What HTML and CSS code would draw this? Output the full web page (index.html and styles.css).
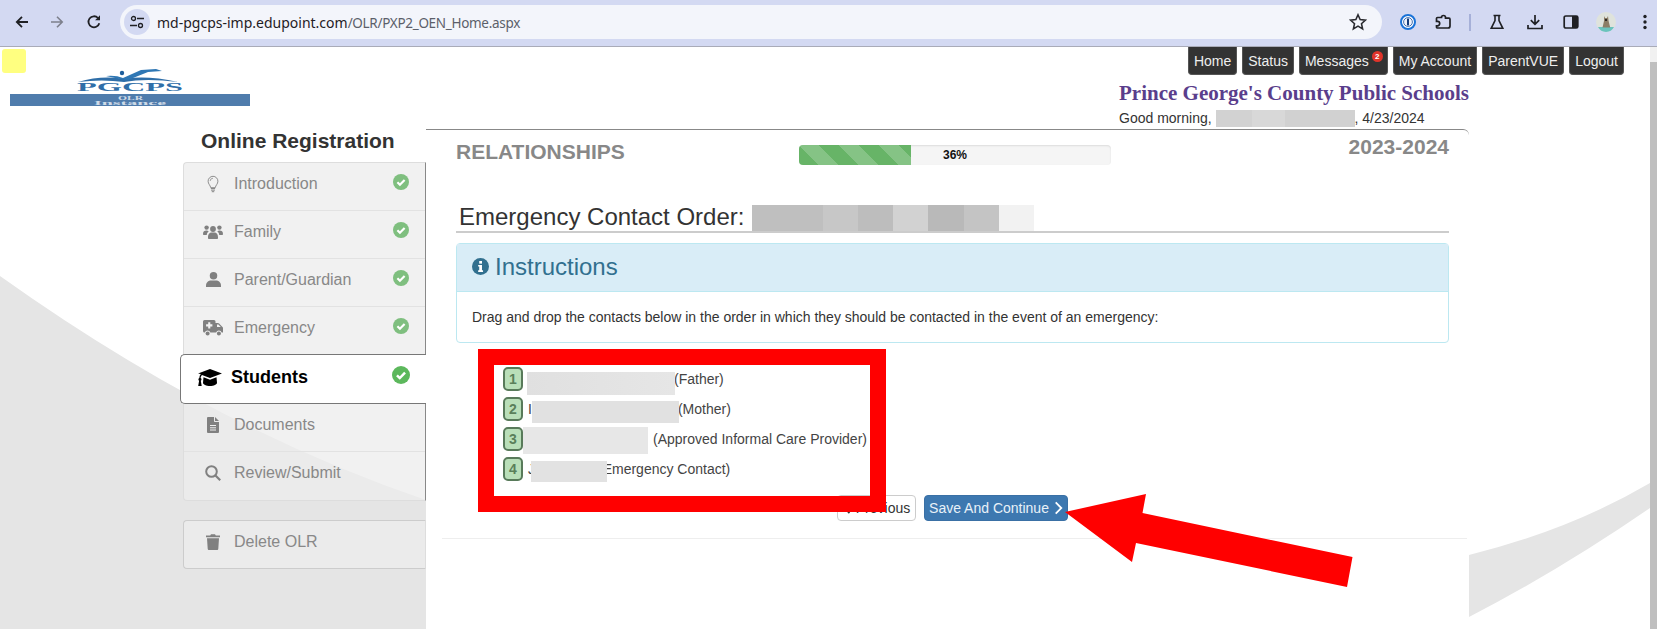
FILE: index.html
```html
<!DOCTYPE html>
<html lang="en">
<head>
<meta charset="utf-8">
<title>Online Registration</title>
<link rel="stylesheet" href="styles.css">
</head>
<body>
<svg class="defs" width="0" height="0" aria-hidden="true">
  <symbol id="i-check" viewBox="0 0 16 16"><circle cx="8" cy="8" r="8" fill="currentColor"/><path d="M4.4 8.3l2.5 2.4 4.7-4.8" fill="none" stroke="#fff" stroke-width="2.2"/></symbol>
  <symbol id="i-bulb" viewBox="0 0 16 20"><path d="M8 1.2a5.6 5.6 0 0 0-5.6 5.6c0 3.2 2.6 4.6 3 7.4h5.2c.4-2.8 3-4.2 3-7.4A5.6 5.6 0 0 0 8 1.2z" fill="none" stroke="currentColor" stroke-width="1"/><path d="M5.6 15.2h4.8M5.8 17h4.4M6.6 18.8h2.8" stroke="currentColor" stroke-width="1.1" fill="none"/><path d="M8 3.4a3.4 3.4 0 0 0-3.3 3.2" fill="none" stroke="currentColor" stroke-width=".8"/></symbol>
  <symbol id="i-users" viewBox="0 0 20 16"><circle cx="3.6" cy="3.6" r="2.2" fill="currentColor"/><circle cx="16.4" cy="3.6" r="2.2" fill="currentColor"/><circle cx="10" cy="5" r="2.9" fill="currentColor"/><path d="M0 10c0-2.4 1.4-3.4 3.4-3.4 1 0 1.8.3 2.3.8C4.4 8.300 3.800 9.500 3.800 11H1c-.6 0-1-.4-1-1zM20 10c0-2.400-1.400-3.400-3.400-3.400-1 0-1.800.3-2.300.8 1.300.9 1.900 2.100 1.900 3.600H19c.6 0 1-.4 1-1zM5 13c0-2.600 1.600-4.400 3.400-4.400h3.200C13.400 8.600 15 10.400 15 13v1c0 .7-.5 1-1 1H6c-.5 0-1-.3-1-1z" fill="currentColor"/></symbol>
  <symbol id="i-user" viewBox="0 0 16 16"><circle cx="8" cy="4" r="4" fill="currentColor"/><path d="M0 14.500C0 11.300 2.400 9 5 9h6c2.600 0 5 2.300 5 5.500V16H0z" fill="currentColor"/></symbol>
  <symbol id="i-amb" viewBox="0 0 20 16"><path d="M1.500 0h9.500a1.500 1.500 0 0 1 1.500 1.500V3h2.400c.5 0 .9.200 1.200.5L19.500 7c.3.3.5.7.5 1.100V12.500h-1.300a3 3 0 0 0-5.600 0H7.400a3 3 0 0 0-5.600 0H1.500A1.500 1.500 0 0 1 0 11V1.500A1.500 1.500 0 0 1 1.500 0z" fill="currentColor"/><circle cx="4.600" cy="13.400" r="2" fill="currentColor"/><circle cx="15.900" cy="13.400" r="2" fill="currentColor"/><path d="M5.200 2.200h2.100v2.100h2.100v2.100H7.300v2.100H5.200V6.400H3.100V4.300h2.100z" fill="#f1f1f1"/><path d="M14 4.600h1.400l2.400 2.500H14z" fill="#f1f1f1"/></symbol>
  <symbol id="i-cap" viewBox="0 0 24 18"><path d="M12 0l12 4.500-12 4.600-8-3.100c-.9.800-1.300 1.900-1.400 3.100.6.300.9.800.9 1.400 0 .5-.3 1-.7 1.300l.9 5.200H.2l.9-5.200C.7 11.500.4 11 .4 10.500c0-.6.4-1.100.9-1.400.1-1.500.6-2.900 1.500-4L0 4.500z" fill="currentColor"/><path d="M5.500 8.200l6.500 2.500 6.500-2.500.5 5.600c0 1.700-3.200 3.200-7 3.200s-7-1.500-7-3.200z" fill="currentColor"/></symbol>
  <symbol id="i-file" viewBox="0 0 12 16"><path d="M1 0h6v4.200c0 .5.300.8.800.8H12v10a1 1 0 0 1-1 1H1a1 1 0 0 1-1-1V1a1 1 0 0 1 1-1z" fill="currentColor"/><path d="M8 0l4 4H8z" fill="currentColor"/><path d="M3 8.500h6M3 10.800h6M3 13h6" stroke="#f0f0f0" stroke-width="1"/></symbol>
  <symbol id="i-search" viewBox="0 0 16 16"><circle cx="6.500" cy="6.500" r="5.300" fill="none" stroke="currentColor" stroke-width="2"/><path d="M10.500 10.500l4.700 4.700" stroke="currentColor" stroke-width="2.200" fill="none"/></symbol>
  <symbol id="i-trash" viewBox="0 0 14 16"><path d="M0 1.500h4.200L5 .3h4l.8 1.200H14v1.700H0z" fill="currentColor"/><path d="M1 4.200h12l-.7 10.500c0 .7-.6 1.300-1.300 1.300H3c-.7 0-1.300-.6-1.300-1.300z" fill="currentColor"/></symbol>
</svg>

<header class="chrome">
  <svg class="tb tb-back" viewBox="0 0 16 16"><path d="M14 8H3M8 2.800L2.800 8 8 13.200" fill="none" stroke="#1f2024" stroke-width="1.800"/></svg>
  <svg class="tb tb-forward" viewBox="0 0 16 16"><path d="M2 8h11M8 2.800L13.200 8 8 13.200" fill="none" stroke="#7d808c" stroke-width="1.600"/></svg>
  <svg class="tb tb-reload" viewBox="0 0 16 16"><path d="M13.300 9.200A5.500 5.500 0 1 1 12 4" fill="none" stroke="#1f2024" stroke-width="1.800"/><path d="M14 1.300v4.900H9.100z" fill="#1f2024"/></svg>
  <div class="omnibox">
    <span class="site-info"><svg viewBox="0 0 16 16" width="16" height="16"><circle cx="4.500" cy="4.500" r="2" fill="none" stroke="#1f2024" stroke-width="1.300"/><circle cx="11.500" cy="11.500" r="2" fill="none" stroke="#1f2024" stroke-width="1.300"/><path d="M8 4.500h7M1 11.500h7" stroke="#1f2024" stroke-width="1.300"/></svg></span>
    <span class="url"><span class="url-host">md-pgcps-imp.edupoint.com</span>/OLR/PXP2_OEN_Home.aspx</span>
    <svg class="star" viewBox="0 0 16 16"><path d="M8 1.600l1.900 4.300 4.700.5-3.500 3.100 1 4.600L8 11.700l-4.100 2.400 1-4.600L1.400 6.400l4.700-.5z" fill="none" stroke="#2a2b30" stroke-width="1.400"/></svg>
  </div>
  <svg class="tb tb-pw" viewBox="0 0 16 16"><circle cx="8" cy="8" r="7" fill="#fff" stroke="#1a73d8" stroke-width="2"/><circle cx="8" cy="8" r="4.400" fill="#eef2fa" stroke="#1b4f9c" stroke-width=".8"/><rect x="7" y="4.600" width="2" height="6.800" fill="#123a78"/></svg>
  <svg class="tb tb-ext" viewBox="0 0 18 18"><path d="M5 4.500h2.500a2 2 0 0 1 4 0V5.200h3.500a1 1 0 0 1 1 1V13a2 2 0 0 1-2 2H3.500a1 1 0 0 1-1-1v-1.200h1a2.200 2.200 0 0 0 0-4.400h-1V5.500a1 1 0 0 1 1-1z" fill="none" stroke="#1f2024" stroke-width="1.700"/></svg>
  <span class="tb-sep"></span>
  <svg class="tb tb-flask" viewBox="0 0 16 16"><path d="M4.500 1.500h7M6 1.500v5L2.200 14.300h11.600L10 6.500v-5" fill="none" stroke="#1f2024" stroke-width="1.600"/></svg>
  <svg class="tb tb-dl" viewBox="0 0 16 16"><path d="M8 1v9M3.800 6.200L8 10.400l4.200-4.200M1 11v3.500h14V11" fill="none" stroke="#1f2024" stroke-width="1.700"/></svg>
  <svg class="tb tb-side" viewBox="0 0 16 16"><rect x="1.200" y="2" width="13.600" height="12" rx="1.600" fill="none" stroke="#1f2024" stroke-width="1.700"/><rect x="9" y="2" width="5.800" height="12" fill="#1f2024"/></svg>
  <svg class="tb tb-avatar" viewBox="0 0 20 20"><circle cx="10" cy="10" r="10" fill="#dfe3dc"/><path d="M2 15h16a9 9 0 0 1-16 0z" fill="#6ac3bd"/><path d="M8 4l1 2h2l1-2 .6 5 1.600 6.500H6.500L8 9z" fill="#8b7d66"/><path d="M9 7h2v2H9z" fill="#2d2a26"/></svg>
  <svg class="tb tb-menu" viewBox="0 0 4 16"><circle cx="2" cy="2.500" r="1.700" fill="#1f2024"/><circle cx="2" cy="8" r="1.700" fill="#1f2024"/><circle cx="2" cy="13.500" r="1.700" fill="#1f2024"/></svg>
</header>

<div class="viewport">
  <div class="page">
    <svg class="backdrop" viewBox="0 0 1650 582" width="1650" height="582" aria-hidden="true">
      <path d="M0 229Q213 381 426 453V582H0Z" fill="#e5e5e5"/>
      <path d="M1469 508Q1570 483 1650 436V461Q1560 523 1469 570Z" fill="#e5e5e5"/>
    </svg>

    <div class="flag"></div>

    <div class="top">
      <div class="logo">
        <svg viewBox="0 0 240 37" width="240" height="37">
          <path d="M68 13Q92 6 114 10Q136 6 168 13Q136 9 114 13Q92 10 68 13Z" fill="#2f6ea8"/>
          <path d="M96 7Q106 6 113 9L131 1L146 0L152 2L138 3L118 11Q108 10 96 7Z" fill="#2f77b4"/>
          <circle cx="112" cy="4" r="2.200" fill="#1f5f9c"/>
          <text class="logo-mark" x="67" y="22" textLength="106" lengthAdjust="spacingAndGlyphs">PGCPS</text>
          <rect x="0" y="25" width="240" height="12" fill="#4f7cac"/>
          <text class="logo-sub" x="108" y="31" textLength="25" lengthAdjust="spacingAndGlyphs">OLR</text>
          <text class="logo-sub" x="84" y="36" textLength="72" lengthAdjust="spacingAndGlyphs">Instance</text>
        </svg>
      </div>
      <div class="top-right">
        <nav class="nav">
          <a class="nav-btn">Home</a>
          <a class="nav-btn">Status</a>
          <a class="nav-btn nav-msg">Messages<span class="badge">2</span></a>
          <a class="nav-btn">My Account</a>
          <a class="nav-btn">ParentVUE</a>
          <a class="nav-btn">Logout</a>
        </nav>
        <div class="school">Prince George's County Public Schools</div>
        <div class="greeting">Good morning, <span class="mask mask-greet"></span>, 4/23/2024</div>
      </div>
    </div>

    <div class="main">
      <aside class="sidebar">
        <h3 class="side-title">Online Registration</h3>
        <ul class="steps">
          <li class="step"><span class="step-icon"><svg width="14" height="18"><use href="#i-bulb"/></svg></span>Introduction<svg class="ok" width="16" height="16"><use href="#i-check"/></svg></li>
          <li class="step"><span class="step-icon"><svg width="20" height="16"><use href="#i-users"/></svg></span>Family<svg class="ok" width="16" height="16"><use href="#i-check"/></svg></li>
          <li class="step"><span class="step-icon"><svg width="15" height="15"><use href="#i-user"/></svg></span>Parent/Guardian<svg class="ok" width="16" height="16"><use href="#i-check"/></svg></li>
          <li class="step"><span class="step-icon"><svg width="20" height="16"><use href="#i-amb"/></svg></span>Emergency<svg class="ok" width="16" height="16"><use href="#i-check"/></svg></li>
          <li class="step step-active"><span class="step-icon"><svg width="24" height="18"><use href="#i-cap"/></svg></span>Students<svg class="ok" width="18" height="18"><use href="#i-check"/></svg></li>
          <li class="step"><span class="step-icon"><svg width="12" height="16"><use href="#i-file"/></svg></span>Documents</li>
          <li class="step"><span class="step-icon"><svg width="16" height="16"><use href="#i-search"/></svg></span>Review/Submit</li>
        </ul>
        <div class="delete"><span class="step-icon"><svg width="14" height="16"><use href="#i-trash"/></svg></span>Delete OLR</div>
      </aside>

      <section class="content">
        <div class="status-row">
          <div class="section-name">RELATIONSHIPS</div>
          <div class="progress"><div class="progress-fill"></div><span class="progress-label">36%</span></div>
          <div class="year">2023-2024</div>
        </div>
        <h2 class="order-title">Emergency Contact Order: <span class="mask mask-order"></span></h2>
        <div class="panel">
          <div class="panel-head"><svg class="info" viewBox="0 0 16 16" width="17" height="17"><circle cx="8" cy="8" r="8" fill="#31708f"/><rect x="6.800" y="2.800" width="2.600" height="2.500" fill="#fff"/><path d="M5.800 6.500h3.600v5h1v1.600H5.800v-1.600h1v-3.400h-1z" fill="#fff"/></svg>Instructions</div>
          <div class="panel-body">Drag and drop the contacts below in the order in which they should be contacted in the event of an emergency:</div>
        </div>
        <ol class="contacts">
          <li class="contact"><span class="num">1</span><span class="mask mask-c1"></span><span>(Father)</span></li>
          <li class="contact"><span class="num">2</span><span class="initial initial-i">I</span><span class="mask mask-c2"></span><span>(Mother)</span></li>
          <li class="contact"><span class="num">3</span><span class="mask mask-c3"></span><span>(Approved Informal Care Provider)</span></li>
          <li class="contact"><span class="num">4</span><span class="initial initial-j">J</span><span class="mask mask-c4"></span><span>(Emergency Contact)</span></li>
        </ol>
        <div class="actions">
          <button class="btn btn-prev"><svg viewBox="0 0 8 12" width="8" height="12"><path d="M6.500 1L1.500 6l5 5" fill="none" stroke="#333" stroke-width="1.800"/></svg>Previous</button>
          <button class="btn btn-save">Save And Continue<svg viewBox="0 0 8 12" width="9" height="14"><path d="M1.500 1l5 5-5 5" fill="none" stroke="#fff" stroke-width="1.600"/></svg></button>
        </div>
        <div class="rule"></div>
      </section>
    </div>

    <svg class="annotations" viewBox="0 0 1650 582" width="1650" height="582" aria-hidden="true">
      <rect x="486" y="310" width="392" height="147" fill="none" stroke="#ff0000" stroke-width="16"/>
      <path d="M1065 465L1146 447L1142.500 466L1352.500 510L1347 540L1136 496L1132 515Z" fill="#ff0000"/>
    </svg>
  </div>
  <div class="scrollbar"><div class="scroll-thumb"></div></div>
</div>
</body>
</html>
```
FILE: styles.css
```css
* { box-sizing: border-box; }
html, body { margin: 0; padding: 0; height: 100%; overflow: hidden; }
body { font-family: "Liberation Sans", Arial, sans-serif; font-size: 14px; color: #333; background: #fff; }
.defs { position: absolute; }

/* browser chrome */
.chrome { height: 47px; background: #d3d9f2; border-bottom: 1px solid #a9abb8; display: flex; align-items: center; padding: 0 0 2px 14px; }
.tb { display: block; flex: none; width: 16px; height: 16px; }
.tb-forward { margin-left: 19px; }
.tb-reload { margin-left: 21px; }
.omnibox { margin-left: 18px; width: 1262px; height: 34px; border-radius: 17px; background: #f3f5fb; display: flex; align-items: center; padding: 0 15px 0 4px; flex: none; }
.site-info { width: 26px; height: 26px; border-radius: 50%; background: #d3d9f2; display: flex; align-items: center; justify-content: center; flex: none; }
.url { margin-left: 7px; font-family: "Noto Sans", sans-serif; font-size: 13.5px; letter-spacing: -.3px; color: #5c5f6a; flex: 1; }
.url-host { font-size: 14px; letter-spacing: 0; color: #1f2024; }
.star { width: 18px; height: 18px; flex: none; }
.tb-pw { margin-left: 18px; width: 16px; height: 16px; }
.tb-ext { margin-left: 18px; width: 18px; height: 18px; }
.tb-sep { margin-left: 17px; width: 2px; height: 17px; background: #a6b0d8; flex: none; }
.tb-flask { margin-left: 18px; width: 16px; height: 16px; }
.tb-dl { margin-left: 22px; }
.tb-side { margin-left: 20px; }
.tb-avatar { margin-left: 17px; width: 20px; height: 20px; }
.tb-menu { margin-left: 27px; width: 4px; height: 16px; }

/* viewport */
.viewport { display: flex; height: 582px; }
.page { position: relative; isolation: isolate; width: 1650px; height: 582px; flex: none; overflow: hidden; }
.backdrop { position: absolute; left: 0; top: 0; z-index: -1; }
.annotations { position: absolute; left: 0; top: 0; pointer-events: none; }
.scrollbar { width: 7px; background: #f1f1f1; padding-top: 15px; }
.scroll-thumb { height: 100%; background: #bfbfbf; }

/* header */
.flag { position: absolute; left: 2px; top: 2px; width: 24px; height: 24px; border-radius: 3px; background: #ffff80; }
.top { height: 82px; display: flex; }
.logo { width: 1119px; padding: 22px 0 0 10px; flex: none; }
.logo svg { display: block; }
.logo-mark { font-family: "Liberation Serif", serif; font-weight: 700; font-size: 13px; fill: #2f6ea8; }
.logo-sub { font-family: "Liberation Serif", serif; font-weight: 700; font-size: 6px; fill: #cfdbe8; }
.top-right { flex: 1; }
.nav { display: flex; justify-content: flex-end; gap: 5px; padding-right: 26px; margin-left: -100px; }
.nav-btn { position: relative; height: 28px; padding: 0 5px; background: #333; color: #eee; font-size: 14px; line-height: 28px; border: 1px solid #555; border-top: 0; border-radius: 0 0 4px 4px; white-space: nowrap; }
.nav-msg { padding-right: 18px; }
.badge { position: absolute; right: 4px; top: 4px; width: 11px; height: 11px; border-radius: 50%; background: #e0342a; color: #fff; font-size: 8px; font-weight: 700; line-height: 11px; text-align: center; }
.school { margin-top: 5px; font-family: "Liberation Serif", serif; font-weight: 700; font-size: 21px; line-height: 26px; color: #5a3e8c; white-space: nowrap; }
.greeting { margin-top: 3px; font-size: 14px; line-height: 18px; color: #333; white-space: nowrap; }

/* masks */
.mask { display: inline-block; flex: none; }
.mask-greet { width: 139px; height: 17px; vertical-align: -4px; background: linear-gradient(90deg, #d2d2d2 0 26%, #d8d8d8 26% 50%, #d1d1d1 50% 100%); }
.mask-order { width: 282px; height: 26px; margin-left: 1px; vertical-align: -6px; background: linear-gradient(90deg, #bfbfbf 0 25%, #c7c7c7 25% 37.500%, #bdbdbd 37.500% 50%, #d2d2d2 50% 62.500%, #b9b9b9 62.500% 75%, #c4c4c4 75% 87.500%, #f2f2f2 87.500% 100%); }
.mask-c1 { width: 148px; height: 23px; margin: 0 -1px 0 4px; transform: translateY(5px); background: linear-gradient(90deg, #e0e0e0, #e3e3e3 50%, #e6e6e6); }
.mask-c2 { width: 147px; height: 22px; margin-right: -1px; transform: translateY(4px); background: #e1e1e1; }
.mask-c3 { width: 125px; height: 27px; margin: 0 5px 0 0; background: #e7e7e7; }
.mask-c4 { width: 76px; height: 21px; margin-right: -9px; transform: translateY(4px); background: #e2e2e2; }

/* main grid */
.main { display: grid; grid-template-columns: 426px 1043px; }
.sidebar { padding-left: 183px; position: relative; z-index: 1; }
.side-title { margin: 0; height: 33px; padding-left: 18px; font-size: 21px; line-height: 24px; font-weight: 700; color: #333; white-space: nowrap; }
.steps { margin: 0; padding: 0; list-style: none; background: rgba(237,237,237,.77); border: 1px solid #ddd; border-right: 1px solid #888; border-radius: 4px 0 0 4px; width: 243px; }
.step { height: 48px; padding: 9px 16px 0 15px; display: flex; align-items: flex-start; font-size: 16px; line-height: 23px; color: #888; border-bottom: 1px solid #e2e2e2; white-space: nowrap; }
.step:last-child { border-bottom: 0; }
.step-icon { width: 28px; height: 23px; margin-right: 7px; display: flex; align-items: center; justify-content: center; color: #808080; flex: none; }
.step-icon svg { display: block; }
.ok { margin-left: auto; margin-top: 2px; color: #7fbf7f; flex: none; }
.step-active { height: 50px; width: 246px; margin: -1px 0 0 -4px; padding: 11px 16px 0 17px; background: #fff; border: 1px solid #777; border-right: 0; border-radius: 5px 0 0 5px; color: #000; font-size: 18px; font-weight: 700; }
.step-active .step-icon { color: #000; width: 24px; margin-right: 9px; }
.step-active .ok { color: #5cb85c; margin-top: 0; }
.delete { margin-top: 19px; width: 243px; height: 49px; padding: 9px 15px 0 15px; display: flex; align-items: flex-start; font-size: 16px; line-height: 23px; color: #888; background: rgba(237,237,237,.77); border: 1px solid #ccc; border-right-color: #ddd; border-radius: 4px 0 0 4px; }

/* content */
.content { height: 500px; background: #fff; border-top: 1px solid #888; border-top-right-radius: 6px; padding: 0 20px 0 30px; }
.status-row { height: 35px; display: flex; align-items: flex-start; }
.section-name { width: 343px; margin-top: 10px; font-size: 21px; line-height: 24px; font-weight: 700; color: #888; flex: none; }
.progress { position: relative; width: 312px; height: 20px; margin-top: 15px; background: #f5f5f5; border-radius: 4px; overflow: hidden; box-shadow: inset 0 1px 2px rgba(0,0,0,.1); flex: none; }
.progress-fill { width: 36%; height: 100%; background-color: #5fb05f; background-image: linear-gradient(45deg, rgba(255,255,255,.2) 25%, transparent 25%, transparent 50%, rgba(255,255,255,.2) 50%, rgba(255,255,255,.2) 75%, transparent 75%); background-size: 40px 40px; opacity: .95; }
.progress-label { position: absolute; left: 0; right: 0; top: 0; text-align: center; font-size: 12px; font-weight: 700; line-height: 20px; color: #111; }
.year { margin-left: auto; margin-top: 5px; font-size: 21px; line-height: 24px; font-weight: 700; color: #888; }
.order-title { margin: 39px 0 0; height: 29px; padding-left: 3px; font-size: 24px; font-weight: 400; line-height: 26px; color: #333; border-bottom: 2px solid #ccc; white-space: nowrap; }
.panel { margin-top: 10px; height: 100px; border: 1px solid #bce8f1; border-radius: 4px; }
.panel-head { height: 48px; padding: 0 0 2px 15px; display: flex; align-items: center; gap: 6px; background: #d9edf7; color: #31708f; font-size: 24px; border-bottom: 1px solid #bce8f1; }
.info { flex: none; }
.panel-body { height: 50px; padding-left: 15px; font-size: 14px; line-height: 50px; color: #333; }
.contacts { margin: 24px 0 0 47px; padding: 0; list-style: none; }
.contact { height: 30px; display: flex; align-items: flex-start; font-size: 14px; line-height: 24px; color: #444; white-space: nowrap; }
.num { width: 20px; height: 24px; margin-right: 0; background: #b9dfb9; border: 2px solid #587a5a; border-radius: 5px; color: #5a7f5a; font-weight: 700; font-size: 14px; line-height: 20px; text-align: center; flex: none; }
.initial { margin-left: 5px; }
.initial-i { margin-right: 0; }
.initial-j { margin-right: -4px; }
.actions { margin-top: 8px; padding-left: 381px; display: flex; gap: 8px; }
.btn { height: 26px; padding: 0; border-radius: 4px; font-family: "Liberation Sans", Arial, sans-serif; font-size: 14px; display: flex; align-items: center; justify-content: center; gap: 5px; }
.btn-prev { width: 79px; background: #fff; border: 1px solid #ccc; color: #333; }
.btn-save { width: 144px; background: #3d78b0; border: 1px solid #3a70a5; color: #e8f1f8; }
.rule { margin: 17px -18px 0 -14px; height: 1px; background: #eee; }
```
